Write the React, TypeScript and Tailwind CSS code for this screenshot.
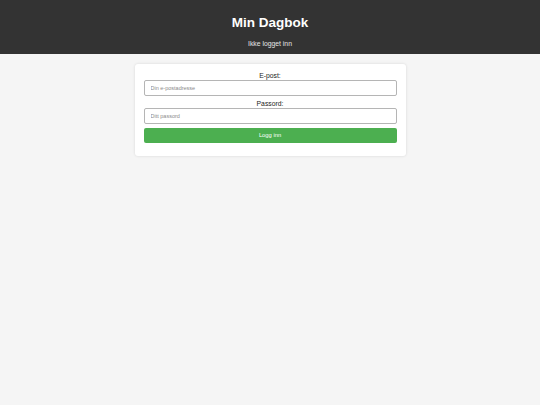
export default function App() {
  return (
    <div className="min-h-[405px] bg-[#f5f5f5] font-['Liberation_Sans',Arial,sans-serif]">
      {/* Header */}
      <header className="h-[54px] bg-[#333333] text-center flex flex-col items-center">
        <h1 className="mt-[14px] text-[13.5px] leading-[17px] font-bold text-white">Min Dagbok</h1>
        <p className="mt-[9px] text-[6.8px] leading-[8px] text-[#e6e6e6]">Ikke logget inn</p>
      </header>

      {/* Login card */}
      <div className="pt-[10px]">
        <form className="mx-auto w-[271px] bg-white rounded-[3px] shadow-[0_0_3px_rgba(0,0,0,0.12)] px-[9px] pt-[8px] pb-[13px] flex flex-col">
          <label className="h-[7.5px] text-center text-[6.8px] leading-[7.5px] text-[#222]">E-post:</label>
          <input
            type="email"
            placeholder="Din e-postadresse"
            className="h-[16px] border border-[#b5b5b5] rounded-[2px] px-[6px] text-[5.5px] text-[#333] placeholder:text-[#8a8a8a] outline-none"
          />
          <label className="mt-[4.5px] h-[7.5px] text-center text-[6.8px] leading-[7.5px] text-[#222]">Passord:</label>
          <input
            type="password"
            placeholder="Ditt passord"
            className="h-[16px] border border-[#b5b5b5] rounded-[2px] px-[6px] text-[5.5px] text-[#333] placeholder:text-[#8a8a8a] outline-none"
          />
          <button
            type="button"
            className="mt-[4.5px] h-[14.5px] bg-[#4caf50] rounded-[2px] text-white text-[5.8px] leading-[14.5px]"
          >
            Logg inn
          </button>
        </form>
      </div>
    </div>
  );
}
